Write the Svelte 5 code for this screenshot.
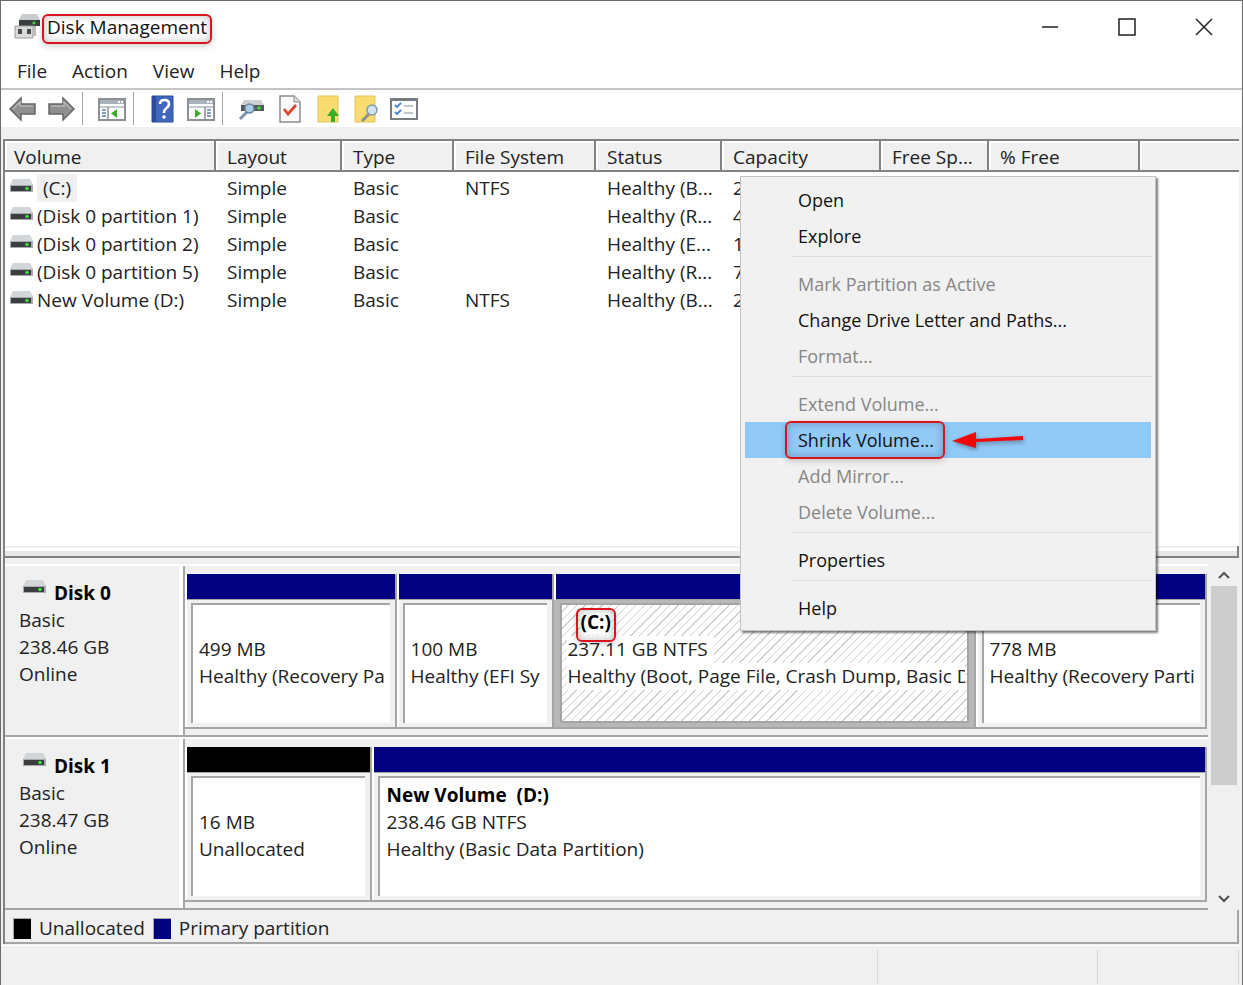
<script lang="ts">
	type Partition = {
		name?: string;
		size: string;
		status: string;
		share: number;
		kind: 'primary' | 'unallocated';
		selected?: boolean;
	};

	type Disk = {
		name: string;
		size: string;
		partitions: Partition[];
	};

	const menus = ['File', 'Action', 'View', 'Help'];

	const columns = [
		{ label: 'Volume', width: 211 },
		{ label: 'Layout', width: 126 },
		{ label: 'Type', width: 112 },
		{ label: 'File System', width: 142 },
		{ label: 'Status', width: 126 },
		{ label: 'Capacity', width: 159 },
		{ label: 'Free Sp...', width: 108 },
		{ label: '% Free', width: 151 }
	];

	const volumes = [
		{ name: '(C:)', fs: 'NTFS', status: 'Healthy (B...', capacity: '237.11 GB', selected: true },
		{ name: '(Disk 0 partition 1)', fs: '', status: 'Healthy (R...', capacity: '499 MB' },
		{ name: '(Disk 0 partition 2)', fs: '', status: 'Healthy (E...', capacity: '100 MB' },
		{ name: '(Disk 0 partition 5)', fs: '', status: 'Healthy (R...', capacity: '778 MB' },
		{ name: 'New Volume (D:)', fs: 'NTFS', status: 'Healthy (B...', capacity: '238.46 GB' }
	];

	const disks: Disk[] = [
		{
			name: 'Disk 0',
			size: '238.46 GB',
			partitions: [
				{ size: '499 MB', status: 'Healthy (Recovery Pa', share: 211, kind: 'primary' },
				{ size: '100 MB', status: 'Healthy (EFI Sy', share: 157, kind: 'primary' },
				{
					name: '(C:)',
					size: '237.11 GB NTFS',
					status: 'Healthy (Boot, Page File, Crash Dump, Basic D',
					share: 422,
					kind: 'primary',
					selected: true
				},
				{ size: '778 MB', status: 'Healthy (Recovery Parti', share: 231, kind: 'primary' }
			]
		},
		{
			name: 'Disk 1',
			size: '238.47 GB',
			partitions: [
				{ size: '16 MB', status: 'Unallocated', share: 186, kind: 'unallocated' },
				{
					name: 'New Volume  (D:)',
					size: '238.46 GB NTFS',
					status: 'Healthy (Basic Data Partition)',
					share: 835,
					kind: 'primary'
				}
			]
		}
	];

	// one inner array per group, groups are split by a separator line
	const contextMenu = [
		[{ label: 'Open' }, { label: 'Explore' }],
		[
			{ label: 'Mark Partition as Active', disabled: true },
			{ label: 'Change Drive Letter and Paths...' },
			{ label: 'Format...', disabled: true }
		],
		[
			{ label: 'Extend Volume...', disabled: true },
			{ label: 'Shrink Volume...', active: true },
			{ label: 'Add Mirror...', disabled: true },
			{ label: 'Delete Volume...', disabled: true }
		],
		[{ label: 'Properties' }],
		[{ label: 'Help' }]
	] as { label: string; disabled?: boolean; active?: boolean }[][];
</script>

{#snippet driveIcon()}
	<svg class="drive" width="23" height="14" viewBox="0 0 23 14" aria-hidden="true">
		<path d="M3 0h17l3 6H0z" fill="#d3d6d8" />
		<path d="M0 6h23v7H0z" fill="#a9acae" />
		<path d="M1 7h20v5H1z" fill="#3b3d3f" />
		<circle cx="17" cy="9.500" r="1.800" fill="#3fe03f" />
	</svg>
{/snippet}

<div class="window">
	<header class="titlebar">
		<svg width="27" height="26" viewBox="0 0 27 26" aria-hidden="true">
			<path d="M8 0h15l3 6H5z" fill="#c9cccd" />
			<path d="M5 6h21v6H5z" fill="#3b3e40" />
			<path d="M20 7.500v3M18.500 9h3" stroke="#45dc45" stroke-width="1.300" />
			<path d="M1 12h18v12H1z" fill="#d9dada" stroke="#9c9e9f" />
			<path d="M4 15h4v5H4zM13 15h4v5h-4z" fill="#4a4a4a" />
			<path d="M19 12h3v10h-3z" fill="#b8babb" />
		</svg>
		<h1><span class="callout">Disk Management</span></h1>
		<div class="caption">
			<button aria-label="Minimize">
				<svg width="18" height="18" viewBox="0 0 18 18"><path d="M1 9h16" /></svg>
			</button>
			<button aria-label="Maximize">
				<svg width="18" height="18" viewBox="0 0 18 18"><path d="M1 1h16v16H1z" /></svg>
			</button>
			<button aria-label="Close">
				<svg width="18" height="18" viewBox="0 0 18 18"><path d="M1 1l16 16M17 1L1 17" /></svg>
			</button>
		</div>
	</header>

	<nav class="menubar">
		{#each menus as menu}
			<button>{menu}</button>
		{/each}
	</nav>

	<div class="toolbar">
		<button aria-label="Back">
			<svg width="28" height="26" viewBox="0 0 28 26">
				<path d="M1 13L12 2v6h14v10H12v6z" fill="#8f8f8f" stroke="#666" stroke-width="1.500" />
				<path d="M4 13l7-7v4h13" fill="none" stroke="#b5b5b5" stroke-width="1.500" />
			</svg>
		</button>
		<button aria-label="Forward">
			<svg width="28" height="26" viewBox="0 0 28 26">
				<path d="M27 13L16 2v6H2v10h14v6z" fill="#8f8f8f" stroke="#666" stroke-width="1.500" />
				<path d="M4 10h13V6l7 7" fill="none" stroke="#b5b5b5" stroke-width="1.500" />
			</svg>
		</button>
		<i></i>
		<button aria-label="Show console tree">
			<svg width="28" height="24" viewBox="0 0 28 24">
				<path d="M1 2h26v21H1z" fill="#fff" stroke="#8b9095" stroke-width="2" />
				<path d="M2 3h24v4H2z" fill="#a9b2ba" />
				<path d="M20 4h2v2h-2zM23 4h2v2h-2z" fill="#fff" />
				<path d="M2 9h24v2H2z" fill="#c3c9ce" />
				<path d="M10 10v12" stroke="#8b9095" stroke-width="1.500" />
				<path d="M4 13h4M4 16h4M4 19h4" stroke="#5c7fae" stroke-width="1.500" />
				<path d="M19 12v9l-6-4.500z" fill="#3aae29" />
			</svg>
		</button>
		<i></i>
		<button aria-label="Help">
			<svg width="24" height="28" viewBox="0 0 24 28">
				<path d="M1 1h21v26H1z" fill="#4166bd" stroke="#2c4a96" />
				<path d="M1 1h4v26H1z" fill="#2d4b9b" />
				<path d="M9 9q0-4 4.500-4t4.500 4q0 2-2.500 4t-2.500 5" fill="none" stroke="#fff" stroke-width="2.600" />
				<circle cx="13" cy="22" r="1.800" fill="#fff" />
			</svg>
		</button>
		<button aria-label="Show action pane">
			<svg width="28" height="24" viewBox="0 0 28 24">
				<path d="M1 2h26v21H1z" fill="#fff" stroke="#8b9095" stroke-width="2" />
				<path d="M2 3h24v4H2z" fill="#a9b2ba" />
				<path d="M20 4h2v2h-2zM23 4h2v2h-2z" fill="#fff" />
				<path d="M2 9h24v2H2z" fill="#c3c9ce" />
				<path d="M18 10v12" stroke="#8b9095" stroke-width="1.500" />
				<path d="M20 13h4M20 16h4M20 19h4" stroke="#5c7fae" stroke-width="1.500" />
				<path d="M8 12v9l6-4.500z" fill="#3aae29" />
			</svg>
		</button>
		<i></i>
		<button aria-label="Rescan disks">
			<svg width="28" height="24" viewBox="0 0 28 24">
				<path d="M6 3h17l3 5H3z" fill="#ced1d3" />
				<path d="M3 8h23v6H3z" fill="#54595d" />
				<path d="M21 9v4M19 11h4" stroke="#43d943" stroke-width="1.300" />
				<path d="M9 15l-7 7" stroke="#7d93a8" stroke-width="3" />
				<circle cx="11.500" cy="11.500" r="4.500" fill="#a7cdea" stroke="#6e8499" stroke-width="1.500" />
			</svg>
		</button>
		<button aria-label="Check">
			<svg width="22" height="28" viewBox="0 0 22 28">
				<path d="M1 1h14l6 6v20H1z" fill="#fafafa" stroke="#8c8c8c" stroke-width="1.500" />
				<path d="M15 1v6h6" fill="#ddd" stroke="#8c8c8c" />
				<path d="M5 14l4 5 8-9" fill="none" stroke="#e2452f" stroke-width="2.800" />
			</svg>
		</button>
		<button aria-label="Up one level">
			<svg width="22" height="28" viewBox="0 0 22 28">
				<path d="M1 1h20v26H1z" fill="#f8dc70" stroke="#e3c256" />
				<path d="M14 27v-6h-4l6-8 6 8h-4v6z" fill="#3caa2a" />
			</svg>
		</button>
		<button aria-label="Find">
			<svg width="24" height="28" viewBox="0 0 24 28">
				<path d="M1 1h20v26H1z" fill="#f8dc70" stroke="#e3c256" />
				<path d="M15 19l-7 7" stroke="#8d8f8f" stroke-width="3" />
				<circle cx="18" cy="15" r="5" fill="#cfe4f5" stroke="#8598aa" stroke-width="1.500" />
			</svg>
		</button>
		<button aria-label="Properties">
			<svg width="28" height="22" viewBox="0 0 28 22">
				<path d="M1 1h26v20H1z" fill="#fff" stroke="#787d83" stroke-width="2" />
				<path d="M1 1h26v2H1z" fill="#787d83" />
				<path d="M5 7l2 2 4-4M5 14l2 2 4-4" fill="none" stroke="#3e83d0" stroke-width="1.800" />
				<path d="M14 8h9M14 15h9" stroke="#b0b4b8" stroke-width="1.500" />
			</svg>
		</button>
	</div>

	<main>
		<section class="list">
			<table>
				<colgroup>
					{#each columns as column}
						<col style="width: {column.width}px" />
					{/each}
					<col />
				</colgroup>
				<thead>
					<tr>
						{#each columns as column}
							<th>{column.label}</th>
						{/each}
						<th></th>
					</tr>
				</thead>
				<tbody>
					{#each volumes as volume}
						<tr>
							<td class="name">
								{@render driveIcon()}<span class:selected={volume.selected}>{volume.name}</span>
							</td>
							<td>Simple</td>
							<td>Basic</td>
							<td>{volume.fs}</td>
							<td>{volume.status}</td>
							<td>{volume.capacity}</td>
							<td></td>
							<td></td>
							<td></td>
						</tr>
					{/each}
				</tbody>
			</table>
		</section>
		<div class="splitter"></div>

		<section class="graph">
			<div class="disks">
				{#each disks as disk}
					<article class="disk">
						<div class="disk-info">
							<h2>{@render driveIcon()}{disk.name}</h2>
							<p>Basic</p>
							<p>{disk.size}</p>
							<p>Online</p>
						</div>
						<div class="partitions">
							{#each disk.partitions as part}
								<div class="partition" class:selected={part.selected} style="flex-grow: {part.share}">
									<div class="bar {part.kind}"></div>
									<div class="pane">
										<div class="box">
											<p class="label"><b class:callout={part.selected}>{part.name ?? ''}</b></p>
											<p><span>{part.size}</span></p>
											<p><span>{part.status}</span></p>
										</div>
									</div>
								</div>
							{/each}
						</div>
					</article>
				{/each}
			</div>
			<div class="scrollbar">
				<button aria-label="Scroll up">
					<svg width="12" height="8" viewBox="0 0 12 8"><path d="M1 7l5-5 5 5" /></svg>
				</button>
				<div class="track"><div class="thumb"></div></div>
				<button aria-label="Scroll down">
					<svg width="12" height="8" viewBox="0 0 12 8"><path d="M1 1l5 5 5-5" /></svg>
				</button>
			</div>
		</section>

		<footer class="legend">
			<span class="swatch unallocated"></span>Unallocated
			<span class="swatch primary"></span>Primary partition
		</footer>
	</main>

	<div class="status">
		<span></span>
		<span></span>
		<span></span>
	</div>

	<div class="context" role="menu">
		{#each contextMenu as group}
			<div class="group" role="group">
				{#each group as item}
					<button role="menuitem" class:active={item.active} disabled={item.disabled}>
						{#if item.active}
							<span class="callout">{item.label}</span>
							<svg class="pointer" width="74" height="20" viewBox="0 0 74 20" aria-hidden="true">
								<path d="M1 11L25 2v7l47-3v4l-47 2v6z" fill="#f00808" />
							</svg>
						{:else}
							{item.label}
						{/if}
					</button>
				{/each}
			</div>
		{/each}
	</div>
</div>

<style>
	:global(body) {
		background: #f0f0f0;
	}

	.window {
		position: relative;
		display: flex;
		flex-direction: column;
		min-height: 100vh;
		box-sizing: border-box;
		border: 1px solid #6b6b6b;
		border-bottom: 0;
		background: #f0f0f0;
		color: #222;
		font: 19px/28px 'Open Sans', 'Noto Sans', sans-serif;
	}

	button {
		padding: 0;
		border: 0;
		background: none;
		color: inherit;
		font: inherit;
	}

	h1,
	h2,
	p {
		margin: 0;
	}

	/* red marker frame around the text */
	.callout {
		position: relative;
	}

	.callout::after {
		content: '';
		position: absolute;
		inset: 0 -5px -4px;
		border: 2px solid #d9141c;
		border-radius: 6px;
		box-shadow:
			inset 0 0 8px rgba(0, 0, 0, 0.25),
			0 2px 6px rgba(0, 0, 0, 0.2);
	}

	.titlebar {
		display: flex;
		align-items: center;
		height: 54px;
		box-sizing: border-box;
		padding: 0 0 2px 13px;
		background: #fff;
	}

	h1 {
		flex: 1;
		padding-left: 6px;
		font-size: 19px;
		font-weight: 400;
		color: #111;
	}

	.caption {
		display: flex;
	}

	.caption button {
		display: flex;
		justify-content: center;
		width: 77px;
	}

	.caption path {
		fill: none;
		stroke: #222;
		stroke-width: 1.5;
	}

	.menubar {
		display: flex;
		gap: 25px;
		padding: 2px 16px 3px;
		border-bottom: 2px solid #c4c4c4;
		background: #fff;
	}

	.toolbar {
		display: flex;
		align-items: center;
		height: 37px;
		padding-left: 3px;
		background: #fff;
	}

	.toolbar button {
		display: flex;
		align-items: center;
		justify-content: center;
		width: 38px;
		height: 36px;
	}

	.toolbar i {
		width: 1px;
		height: 33px;
		margin: 0 10px 0 2px;
		background: #a5a5a5;
	}

	main {
		flex: 1;
		display: flex;
		flex-direction: column;
		margin: 12px 3px 0 2px;
		border: 2px solid #828282;
		border-width: 2px 0 0 2px;
	}

	.list {
		flex: 1;
		background: #fff;
	}

	table {
		width: 100%;
		table-layout: fixed;
		border-collapse: separate;
		border-spacing: 0;
	}

	th {
		height: 31px;
		box-sizing: border-box;
		padding: 3px 0 0 11px;
		border: 2px solid #828282;
		border-width: 0 2px 2px 0;
		background: #f0f0f0;
		box-shadow: inset 2px 2px #fff;
		font-weight: 400;
		line-height: 26px;
		text-align: left;
		white-space: nowrap;
	}

	th:first-child {
		padding-left: 9px;
	}

	th:last-child {
		border-right: 0;
	}

	td {
		height: 28px;
		padding: 0 0 0 11px;
		line-height: 28px;
		white-space: nowrap;
	}

	tbody tr:first-child td {
		padding-top: 2px;
	}

	.name {
		padding-left: 5px;
	}

	.name span {
		display: inline-block;
		padding: 0 4px;
	}

	.name .selected {
		padding: 0 6px;
		margin-left: 4px;
		background: #f0f0f0;
	}

	.name .drive {
		vertical-align: 2px;
	}

	.splitter {
		height: 10px;
		border: 2px solid #828282;
		border-width: 0 2px 2px 0;
		background: linear-gradient(#f0f0f0 2px, #fff 2px 5px, #e8e8e8 5px);
	}

	.graph {
		display: flex;
		padding-top: 6px;
	}

	.disks {
		flex: 1;
		min-width: 0;
		margin-right: 3px;
	}

	.disk {
		display: flex;
		height: 173px;
		box-sizing: border-box;
		border-top: 2px solid #fff;
		border-bottom: 2px solid #a5a5a5;
		line-height: 27px;
	}

	.disk-info {
		width: 180px;
		box-sizing: border-box;
		padding: 14px 0 0 14px;
		border-right: 2px solid #a5a5a5;
		box-shadow: inset -4px 0 #fff;
		color: #222;
	}

	h2 {
		display: flex;
		gap: 8px;
		padding-left: 4px;
		font-size: 19px;
		line-height: 27px;
		color: #000;
	}

	.partitions {
		flex: 1;
		display: flex;
		min-width: 0;
		padding: 8px 1px 6px 0;
	}

	.partition {
		flex: 1 1 0;
		display: flex;
		flex-direction: column;
		min-width: 0;
		box-sizing: border-box;
		border: 2px solid #a5a5a5;
		border-width: 0 2px 2px 0;
		box-shadow: inset 2px 0 #fff;
	}

	.bar {
		flex: none;
		height: 25px;
		margin-left: 2px;
		border-bottom: 1px solid #a5a5a5;
	}

	.primary {
		background: #000080;
	}

	.unallocated {
		background: #000;
	}

	.pane {
		flex: 1;
		display: flex;
		min-height: 0;
		padding: 3px 5px 4px 6px;
	}

	.box {
		flex: 1;
		min-width: 0;
		padding: 4px 4px 0 6px;
		border: 2px solid #a5a5a5;
		border-width: 2px 0 0 2px;
		background: #fff;
		overflow: hidden;
	}

	.box p {
		height: 27px;
		white-space: pre;
		overflow: hidden;
	}

	.box .label {
		overflow: visible;
		color: #000;
	}

	.partition.selected .pane {
		background: #b8b8b8;
	}

	.selected .box {
		border-width: 2px;
		padding: 4px 2px 0 5px;
		background: repeating-linear-gradient(135deg, #fff 0 4px, #d0d0d0 4px 5px, #fff 5px 6px);
	}

	.selected .box span {
		display: inline-block;
		padding-right: 6px;
		background: #fff;
	}

	.selected .box .label {
		padding-left: 13px;
	}

	.selected .callout {
		background: #fff;
	}

	.selected .callout::after {
		inset: -1px -5px -7px -4px;
	}

	.scrollbar {
		display: flex;
		flex-direction: column;
		width: 26px;
		margin-right: 2px;
	}

	.scrollbar button {
		display: flex;
		align-items: center;
		justify-content: center;
		height: 22px;
	}

	.scrollbar path {
		fill: none;
		stroke: #505050;
		stroke-width: 2;
	}

	.track {
		flex: 1;
	}

	.thumb {
		height: 66%;
		background: #cdcdcd;
	}

	.legend {
		display: flex;
		align-items: center;
		gap: 8px;
		padding: 4px 8px 0;
		border: 2px solid #a5a5a5;
		border-width: 0 2px 2px 0;
	}

	.swatch {
		width: 17px;
		height: 20px;
		border: 1px solid #a5a5a5;
		border-width: 1px 0 0 1px;
	}

	.status {
		display: grid;
		grid-template-columns: 1fr 220px 141px;
		height: 34px;
		margin-top: 1px;
		padding: 4px 3px 1px 0;
		border-top: 1px solid #fff;
	}

	.status span {
		border-right: 1px solid #d8d8d8;
	}

	.context {
		position: absolute;
		left: 739px;
		top: 175px;
		width: 416px;
		box-sizing: border-box;
		padding: 5px 4px 4px;
		border: 1px solid #c4c4c4;
		background: #f1f1f1;
		box-shadow: 2px 2px 2px rgba(0, 0, 0, 0.5);
		color: #111;
		font-size: 18px;
	}

	.group + .group {
		padding-top: 10px;
		margin-top: 2px;
		background: linear-gradient(#dcdcdc, #dcdcdc) 47px 0 / 100% 1px no-repeat;
	}

	.context button {
		display: flex;
		align-items: center;
		width: 100%;
		height: 36px;
		padding-left: 53px;
		white-space: nowrap;
	}

	.context button:disabled {
		color: #868686;
	}

	.context .active {
		background: #91c9f7;
	}

	.context .callout::after {
		inset: -5px -11px -5px -13px;
	}

	.pointer {
		margin-left: 17px;
		filter: drop-shadow(1px 2px 2px rgba(0, 0, 0, 0.35));
	}
</style>
